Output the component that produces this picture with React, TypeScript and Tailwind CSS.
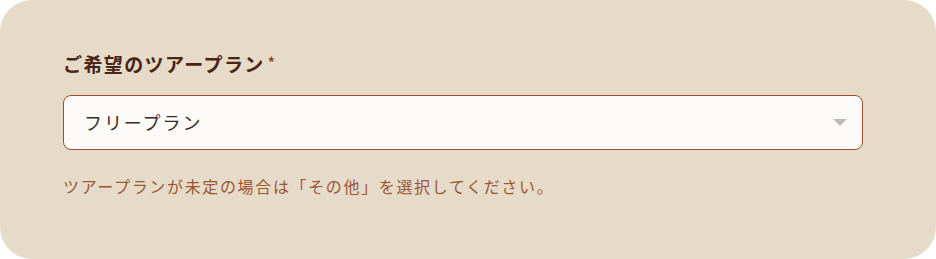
import React from "react";

export default function App() {
  return (
    <div className="w-[936px] h-[259px] bg-white" style={{ fontFamily: '"Noto Sans CJK JP", "Noto Sans", sans-serif' }}>
      <div className="w-full h-full rounded-[32px] bg-[#e6dbc8] pl-[63px] pr-[73px] pt-[50px]">
        <div className="flex items-center h-[28px] text-[19px] font-bold text-[#4a2516] tracking-[1.4px]">
          ご希望のツアープラン
          <span className="ml-[3px] text-[14px] text-[#8a4a2e] relative -top-[2px]">*</span>
        </div>
        <div className="mt-[17px] h-[55px] rounded-[8px] border border-[#9c4f2e] bg-[#fdfbf9] flex items-center justify-between pl-[20px] pr-[15px]">
          <span className="text-[18px] font-normal text-[#3b2b22] tracking-[1.9px]">フリープラン</span>
          <svg width="14" height="8" viewBox="0 0 14 8">
            <path d="M0 0 L14 0 L7 7 Z" fill="#bdbab6" />
          </svg>
        </div>
        <div className="mt-[24px] text-[16px] text-[#9b5735] tracking-[1.65px]">
          ツアープランが未定の場合は「その他」を選択してください。
        </div>
      </div>
    </div>
  );
}
